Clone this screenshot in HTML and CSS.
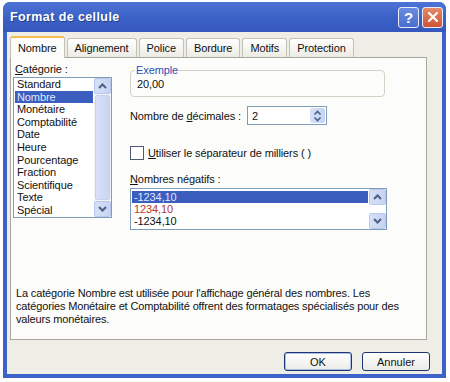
FILE: index.html
```html
<!DOCTYPE html>
<html lang="fr">
<head>
    <meta charset="UTF-8">
    <title>Format de cellule</title>
    <link rel="stylesheet" href="styles.css">
</head>
<body>
    <div class="window">
        <div class="titlebar">
            <span class="title">Format de cellule</span>
            <div class="title-buttons">
                <div class="tb-btn help">?</div>
                <div class="tb-btn close">
                    <svg width="12" height="12" viewBox="0 0 12 12"><path d="M2 2 L10 10 M10 2 L2 10" stroke="#fff" stroke-width="2.2" stroke-linecap="round"/></svg>
                </div>
            </div>
        </div>

        <div class="client">
            <div class="tabs">
                <div class="tab active">Nombre</div>
                <div class="tab">Alignement</div>
                <div class="tab">Police</div>
                <div class="tab">Bordure</div>
                <div class="tab">Motifs</div>
                <div class="tab">Protection</div>
            </div>

            <div class="panel">
                <div class="panel-top">
                    <div class="categorie">
                        <label><u>C</u>atégorie :</label>
                        <div class="listbox cat-list">
                            <ul>
                                <li>Standard</li>
                                <li class="selected">Nombre</li>
                                <li>Monétaire</li>
                                <li>Comptabilité</li>
                                <li>Date</li>
                                <li>Heure</li>
                                <li>Pourcentage</li>
                                <li>Fraction</li>
                                <li>Scientifique</li>
                                <li>Texte</li>
                                <li>Spécial</li>
                            </ul>
                            <div class="scrollbar">
                                <div class="sb-btn"><svg width="9" height="6" viewBox="0 0 9 6"><path d="M1 5 L4.5 1.5 L8 5" fill="none" stroke="#4d6185" stroke-width="2"/></svg></div>
                                <div class="sb-track"></div>
                                <div class="sb-btn"><svg width="9" height="6" viewBox="0 0 9 6"><path d="M1 1 L4.5 4.5 L8 1" fill="none" stroke="#4d6185" stroke-width="2"/></svg></div>
                            </div>
                        </div>
                    </div>

                    <div class="options">
                        <fieldset class="exemple">
                            <legend>Exemple</legend>
                            <div class="exemple-value">20,00</div>
                        </fieldset>

                        <div class="decimales">
                            <label>Nombre de <u>d</u>écimales :</label>
                            <div class="spin">
                                <span>2</span>
                                <div class="spin-btn">
                                    <svg width="9" height="12" viewBox="0 0 9 12"><path d="M1.5 4.5 L4.5 1.5 L7.5 4.5 M1.5 7.5 L4.5 10.5 L7.5 7.5" fill="none" stroke="#4d6185" stroke-width="1.6"/></svg>
                                </div>
                            </div>
                        </div>

                        <div class="milliers">
                            <span class="checkbox"></span>
                            <span><u>U</u>tiliser le séparateur de milliers ( )</span>
                        </div>

                        <label class="neg-label"><u>N</u>ombres négatifs :</label>
                        <div class="listbox neg-list">
                            <ul>
                                <li class="selected">-1234,10</li>
                                <li class="red">1234,10</li>
                                <li>-1234,10</li>
                            </ul>
                            <div class="scrollbar plain">
                                <div class="sb-btn"><svg width="9" height="6" viewBox="0 0 9 6"><path d="M1 5 L4.5 1.5 L8 5" fill="none" stroke="#4d6185" stroke-width="2"/></svg></div>
                                <div class="sb-gap"></div>
                                <div class="sb-btn"><svg width="9" height="6" viewBox="0 0 9 6"><path d="M1 1 L4.5 4.5 L8 1" fill="none" stroke="#4d6185" stroke-width="2"/></svg></div>
                            </div>
                        </div>
                    </div>
                </div>

                <p class="description">La catégorie Nombre est utilisée pour l'affichage général des nombres. Les catégories Monétaire et Comptabilité offrent des formatages spécialisés pour des valeurs monétaires.</p>
            </div>

            <div class="buttons">
                <button class="ok">OK</button>
                <button>Annuler</button>
            </div>
        </div>
    </div>
</body>
</html>
```

FILE: styles.css
```css
* {
    box-sizing: border-box;
    margin: 0;
    padding: 0;
}

body {
    font-family: "Liberation Sans", Arial, sans-serif;
    font-size: 11px;
    letter-spacing: -0.1px;
    color: #111;
    background-color: #ffffff;
    padding: 2px 4px 4px 3px;
}

u {
    text-decoration: underline;
}

.window {
    width: 443px;
    height: 376px;
    background-color: #3d62c8;
    border-radius: 7px 7px 0 0;
    padding: 0 4px 4px 4px;
    display: flex;
    flex-direction: column;
}

.titlebar {
    height: 30px;
    display: flex;
    align-items: center;
    justify-content: space-between;
    background: linear-gradient(#4d73d6, #3a5fc4 60%, #3658be);
    margin: 0 -4px;
    padding: 0 3px 0 7px;
    border-radius: 7px 7px 0 0;
}

.title {
    color: #fff;
    font-weight: bold;
    font-size: 12.5px;
    letter-spacing: 0.4px;
    text-shadow: 1px 1px 0 #253f8c;
}

.title-buttons {
    display: flex;
    gap: 3px;
}

.tb-btn {
    width: 21px;
    height: 21px;
    border: 1px solid #e8ecf8;
    border-radius: 3px;
    display: flex;
    align-items: center;
    justify-content: center;
    color: #fff;
    font-weight: bold;
    font-size: 15px;
}

.tb-btn.help {
    background: linear-gradient(#6b8be0, #4a6ed0);
}

.tb-btn.close {
    background: linear-gradient(#e58a6a, #cf5433);
}

.client {
    flex: 1;
    background-color: #efeee6;
    padding: 4px 5px 0 3px;
    display: flex;
    flex-direction: column;
}

.tabs {
    display: flex;
    align-items: flex-end;
    height: 21px;
}

.tab {
    height: 19px;
    padding: 3px 7px 0 7px;
    border: 1px solid #c4c2b4;
    border-bottom: none;
    border-radius: 3px 3px 0 0;
    background: linear-gradient(#ffffff, #ecebe4);
    margin-right: 2px;
    color: #111;
}

.tab.active {
    height: 22px;
    padding: 4px 7px 0 7px;
    background: #fcfcfa;
    border-top: 2px solid #f2c050;
    position: relative;
    z-index: 1;
    margin-bottom: -1px;
}

.panel {
    height: 283px;
    width: 417px;
    background-color: #fcfcfa;
    border: 1px solid #a9a79c;
    padding: 5px 0 0 2px;
    display: flex;
    flex-direction: column;
}

.panel-top {
    display: flex;
    gap: 18px;
}

.categorie label {
    display: block;
    margin-left: 2px;
    margin-bottom: 2px;
}

.listbox {
    display: flex;
    background: #ffffff;
    border: 1px solid #7f9db9;
}

.listbox ul {
    list-style: none;
    flex: 1;
    padding: 1px 1px;
}

.listbox li {
    height: 12.6px;
    line-height: 12.6px;
    padding-left: 2px;
    white-space: nowrap;
}

.listbox li.selected {
    background-color: #3b5dbd;
    color: #dfe6ff;
}

.listbox li.red {
    color: #b23a2e;
}

.cat-list {
    width: 99px;
    height: 141px;
}

.cat-list ul {
    padding-top: 0;
}

.scrollbar {
    width: 17px;
    display: flex;
    flex-direction: column;
    background-color: #f2f3f6;
}

.scrollbar.plain {
    background-color: #ffffff;
}

.sb-btn {
    height: 16px;
    display: flex;
    align-items: center;
    justify-content: center;
    background: linear-gradient(90deg, #d6e1f8, #c6d3f1);
    border: 1px solid #b8c8ec;
    border-radius: 2px;
}

.sb-track {
    flex: 1;
    margin: 1px 1px;
    background: linear-gradient(90deg, #d7e0f6, #c9d5f1);
    border: 1px solid #c6d2ee;
    border-radius: 2px;
}

.sb-gap {
    flex: 1;
}

.options {
    width: 257px;
}

.exemple {
    border: 1px solid #d4d2c6;
    border-radius: 4px;
    padding: 0 6px 5px 6px;
    height: 33px;
    margin-top: 1px;
    width: 255px;
}

.exemple legend {
    color: #2a4fb5;
    padding: 0 1px;
    margin-left: -2px;
    font-size: 11px;
}

.exemple-value {
    margin-top: 2px;
}

.decimales {
    display: flex;
    align-items: center;
    margin-top: 9px;
}

.decimales label {
    width: 117px;
}

.spin {
    width: 80px;
    height: 19px;
    border: 1px solid #7f9db9;
    background: #fff;
    display: flex;
    align-items: center;
    justify-content: space-between;
    padding-left: 4px;
}

.spin-btn {
    width: 15px;
    height: 15px;
    margin-right: 1px;
    display: flex;
    align-items: center;
    justify-content: center;
    background: linear-gradient(90deg, #d6e1f8, #c6d3f1);
    border-radius: 2px;
}

.milliers {
    display: flex;
    align-items: center;
    gap: 4px;
    margin-top: 21px;
}

.checkbox {
    width: 14px;
    height: 14px;
    border: 1px solid #4c5a78;
    background: #fff;
}

.neg-label {
    display: block;
    margin-top: 13px;
    margin-bottom: 3px;
}

.neg-list {
    width: 257px;
    height: 42px;
}

.neg-list ul {
    padding-top: 2px;
}

.neg-list li {
    height: 12px;
    line-height: 12px;
}

.description {
    margin-top: auto;
    margin-bottom: 13px;
    padding: 0 4px 0 3px;
    line-height: 13px;
    letter-spacing: -0.15px;
}

.buttons {
    display: flex;
    justify-content: flex-end;
    gap: 10px;
    padding: 12px 7px 0 0;
}

.buttons button {
    width: 68px;
    height: 19px;
    font-family: "Liberation Sans", Arial, sans-serif;
    font-size: 11px;
    background: linear-gradient(#ffffff, #ecebe6);
    border: 1px solid #1d3572;
    border-radius: 3px;
    color: #111;
}

.buttons button.ok {
    box-shadow: inset 0 0 0 1px #a9bde8;
}
```
